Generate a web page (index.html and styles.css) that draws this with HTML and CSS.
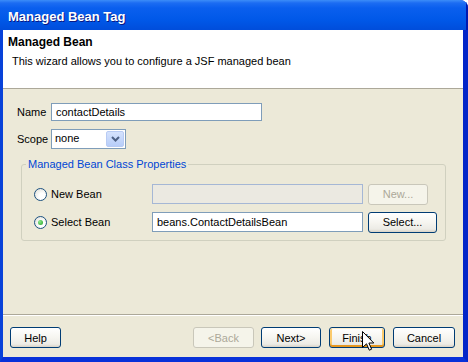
FILE: index.html
```html
<!DOCTYPE html>
<html lang="en">
<head>
    <meta charset="UTF-8">
    <title>Managed Bean Tag</title>
    <link rel="stylesheet" href="styles.css">
</head>
<body>
    <div class="window">
        <div class="titlebar">Managed Bean Tag</div>
        <div class="client">
            <!-- Wizard header -->
            <div class="header">
                <div class="header-title">Managed Bean</div>
                <div class="header-desc">This wizard allows you to configure a JSF managed bean</div>
            </div>

            <!-- Form -->
            <div class="content">
                <div class="row">
                    <label class="label">Name</label>
                    <input type="text" class="field name-field" value="contactDetails">
                </div>
                <div class="row scope-row">
                    <label class="label">Scope</label>
                    <div class="select">
                        <span class="select-text">none</span>
                        <span class="drop">
                            <svg width="9" height="6" viewBox="0 0 9 6"><path d="M1 1 L4.5 4.5 L8 1" fill="none" stroke="#4D6185" stroke-width="2"/></svg>
                        </span>
                    </div>
                </div>

                <fieldset class="group">
                    <legend>Managed Bean Class Properties</legend>
                    <div class="bean-row">
                        <div class="choice">
                            <span class="radio"></span>
                            <span>New Bean</span>
                        </div>
                        <input type="text" class="field bean-field" disabled>
                        <button class="btn disabled new-btn">New...</button>
                    </div>
                    <div class="bean-row">
                        <div class="choice">
                            <span class="radio checked"></span>
                            <span>Select Bean</span>
                        </div>
                        <input type="text" class="field bean-field" value="beans.ContactDetailsBean">
                        <button class="btn select-btn">Select...</button>
                    </div>
                </fieldset>
            </div>

            <!-- Wizard buttons -->
            <div class="footer">
                <button class="btn help-btn">Help</button>
                <div class="spacer"></div>
                <button class="btn disabled back-btn">&lt;Back</button>
                <button class="btn next-btn">Next&gt;</button>
                <button class="btn hot finish-btn">Finish</button>
                <button class="btn cancel-btn">Cancel</button>
            </div>
        </div>
    </div>

    <svg class="cursor" width="13" height="21" viewBox="0 0 13 21">
        <path d="M0.5 0.5 L0.5 16.5 L4.5 12.8 L7.3 19.2 L9.6 18.2 L6.9 12 L11.8 12 Z" fill="#fff" stroke="#000" stroke-width="1"/>
    </svg>
</body>
</html>
```

FILE: styles.css
```css
body {
    margin: 0;
    width: 468px;
    height: 362px;
    overflow: hidden;
    position: relative;
    font-family: "Liberation Sans", Arial, sans-serif;
    font-size: 11px;
    color: #000;
}
.window {
    width: 468px;
    height: 362px;
    display: flex;
    flex-direction: column;
    background: #0831D9;
    border-radius: 0 8px 0 0;
    overflow: hidden;
}
.titlebar {
    height: 30px;
    flex: none;
    box-sizing: border-box;
    padding: 9px 0 0 8px;
    background: linear-gradient(#3C8DF8 0, #1C6CF2 3px, #0A5FEE 8px, #0058E8 20px, #004DDB 30px);
    color: #fff;
    font-size: 13px;
    font-weight: bold;
    text-shadow: 1px 1px 0 #0A1883;
    box-shadow: inset -2px 0 0 #0019B0;
}
.client {
    flex: 1;
    display: flex;
    flex-direction: column;
    background: #ECE9D8;
    border-left: 3px solid #0842D9;
    border-right: 5px solid #0325C8;
    border-bottom: 5px solid #0831D9;
}
.header {
    flex: none;
    background: #fff;
    border-bottom: 1px solid #ACA899;
    padding: 5px 0 0 5px;
    height: 53px;
}
.header-title {
    font-size: 12px;
    font-weight: bold;
    line-height: 14px;
}
.header-desc {
    margin: 5px 0 0 4px;
    line-height: 14px;
}
.content {
    flex: 1;
    padding: 14px 0 0 14px;
}
.row {
    display: flex;
    align-items: center;
}
.scope-row {
    margin-top: 8px;
}
.label {
    width: 34px;
}
.field {
    box-sizing: border-box;
    height: 18px;
    border: 1px solid #7F9DB9;
    background: #fff;
    font-family: "Liberation Sans", Arial, sans-serif;
    font-size: 11px;
    padding: 0 4px;
    margin: 0;
    outline: none;
}
.name-field {
    width: 211px;
}
.select {
    box-sizing: border-box;
    width: 75px;
    height: 20px;
    border: 1px solid #7F9DB9;
    background: #fff;
    display: flex;
    align-items: stretch;
}
.select-text {
    flex: 1;
    padding: 2px 0 0 3px;
}
.drop {
    width: 16px;
    margin: 1px;
    border-radius: 2px;
    background: linear-gradient(#D5E2FD, #B7CDF9);
    border: 1px solid #B8CBF4;
    display: flex;
    align-items: center;
    justify-content: center;
}
.group {
    width: 425px;
    box-sizing: border-box;
    margin: 9px 0 0 4px;
    border: 1px solid #D0D0BF;
    border-radius: 3px;
    padding: 13px 0 8px 12px;
}
.group legend {
    color: #0046D5;
    padding: 0 2px;
    margin-left: -8px;
    line-height: 13px;
}
.bean-row {
    display: flex;
    align-items: center;
    height: 20px;
}
.bean-row + .bean-row {
    margin-top: 8px;
}
.choice {
    width: 118px;
    display: flex;
    align-items: center;
    gap: 4px;
}
.radio {
    width: 13px;
    height: 13px;
    box-sizing: border-box;
    border-radius: 50%;
    border: 1px solid #1C5180;
    background: radial-gradient(circle at 65% 65%, #fff 30%, #DCDBD2 100%);
    position: relative;
}
.radio.checked::after {
    content: "";
    position: absolute;
    left: 3px;
    top: 3px;
    width: 5px;
    height: 5px;
    border-radius: 50%;
    background: radial-gradient(circle at 35% 35%, #8DE98D, #21A121);
}
.bean-field {
    width: 211px;
    height: 20px;
}
.bean-field:disabled {
    background: #EBE9E1;
    border-color: #A5B7D5;
}
.btn {
    box-sizing: border-box;
    height: 21px;
    border: 1px solid #003C74;
    border-radius: 3px;
    background: linear-gradient(#FFFFFF 0, #F6F5F0 50%, #ECEBE5 85%, #D8D2C6 100%);
    font-family: "Liberation Sans", Arial, sans-serif;
    font-size: 11px;
    color: #000;
    padding: 0;
    margin: 0;
}
.btn.disabled {
    border-color: #C9C7BA;
    background: #F5F4EA;
    color: #ACA899;
}
.btn.hot {
    box-shadow: inset 0 1px 0 #FFF0CF, inset 0 -2px 0 #E5971F, inset 2px 0 0 #FBCA6C, inset -2px 0 0 #FBCA6C;
}
.new-btn {
    width: 60px;
    margin-left: 5px;
}
.select-btn {
    width: 69px;
    margin-left: 5px;
}
.footer {
    flex: none;
    border-top: 1px solid #ACA899;
    box-shadow: inset 0 1px 0 #fff;
    display: flex;
    align-items: flex-start;
    padding: 12px 8px 0 7px;
    gap: 8px;
    height: 30px;
}
.spacer {
    flex: 1;
}
.help-btn { width: 51px; }
.back-btn { width: 61px; margin-right: -1px; }
.next-btn { width: 60px; }
.finish-btn { width: 56px; }
.cancel-btn { width: 62px; }
.cursor {
    position: absolute;
    left: 362px;
    top: 331px;
}
```
